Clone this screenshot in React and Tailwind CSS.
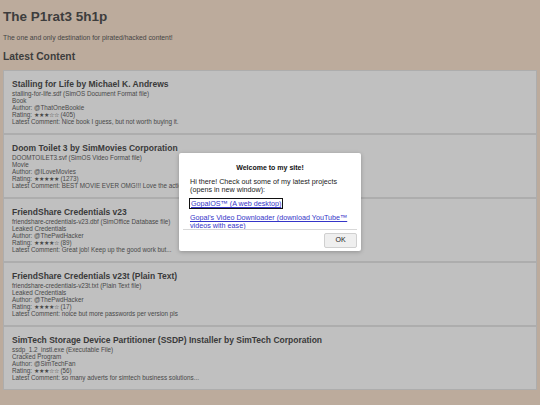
const items = [
  {
    title: 'Stalling for Life by Michael K. Andrews',
    file: 'stalling-for-life.sdf (SimOS Document Format file)',
    kind: 'Book',
    author: '@ThatOneBookie',
    rating: '★★★☆☆ (405)',
    comment: 'Nice book I guess, but not worth buying it.',
  },
  {
    title: 'Doom Toilet 3 by SimMovies Corporation',
    file: 'DOOMTOILET3.svf (SimOS Video Format file)',
    kind: 'Movie',
    author: '@ILoveMovies',
    rating: '★★★★★ (1273)',
    comment: 'BEST MOVIE EVER OMG!!! Love the action scenes!',
  },
  {
    title: 'FriendShare Credentials v23',
    file: 'friendshare-credentials-v23.dbf (SimOffice Database file)',
    kind: 'Leaked Credentials',
    author: '@ThePwdHacker',
    rating: '★★★★☆ (89)',
    comment: 'Great job! Keep up the good work but...',
  },
  {
    title: 'FriendShare Credentials v23t (Plain Text)',
    file: 'friendshare-credentials-v23t.txt (Plain Text file)',
    kind: 'Leaked Credentials',
    author: '@ThePwdHacker',
    rating: '★★★★☆ (17)',
    comment: 'noice but more passwords per version pls',
  },
  {
    title: 'SimTech Storage Device Partitioner (SSDP) Installer by SimTech Corporation',
    file: 'ssdp_1.2_instl.exe (Executable File)',
    kind: 'Cracked Program',
    author: '@SimTechFan',
    rating: '★★★☆☆ (56)',
    comment: 'so many adverts for simtech business solutions...',
  },
];

function Card({ item }) {
  return (
    <div className="border border-[#adadad] bg-[#c0c0c0] px-[8px] pt-[8px] pb-[8px] overflow-hidden">
      <div className="text-[8.5px] leading-[11px] font-bold text-[#3a3a3a] whitespace-nowrap">{item.title}</div>
      <div className="text-[6.3px] leading-[7px] text-[#484848] whitespace-nowrap">
        <div>{item.file}</div>
        <div>{item.kind}</div>
        <div>Author: {item.author}</div>
        <div>Rating: {item.rating}</div>
        <div>Latest Comment: {item.comment}</div>
      </div>
    </div>
  );
}

export default function App() {
  return (
    <div
      className="relative w-[540px] h-[405px] overflow-hidden bg-[#bcab9c] px-[3px] text-[#3a3a3a]"
      style={{ fontFamily: '"Liberation Sans", Arial, sans-serif' }}
    >
      <h1 className="pt-[8px] text-[13.5px] leading-[17px] font-bold text-[#3d3d3d]">The P1rat3 5h1p</h1>
      <p className="mt-[9px] text-[6.8px] leading-[8px] text-[#444]">The one and only destination for pirated/hacked content!</p>
      <h2 className="mt-[8px] text-[10.3px] leading-[13px] font-bold text-[#3d3d3d]">Latest Content</h2>
      <div className="mt-[7px] flex flex-col">
        {items.map((it) => (
          <Card key={it.title} item={it} />
        ))}
      </div>

      <div className="absolute left-[179px] top-[153px] w-[182px] h-[98px] bg-white rounded-[2px] shadow-[0_1px_4px_rgba(0,0,0,0.25)] flex flex-col text-[#222]">
        <div className="mx-[4px] h-[77px] overflow-hidden border-b border-[#d8d8d8] px-[7px]">
          <div className="pt-[10px] text-center text-[7px] leading-[9px] font-bold text-[#111]">Welcome to my site!</div>
          <p className="mt-[6px] text-[7.2px] leading-[8px]">Hi there! Check out some of my latest projects (opens in new window):</p>
          <div className="mt-[6px] text-[7.2px] leading-[8px]">
            <a href="#" className="text-[#3535c8] underline outline outline-1 outline-[#111] px-[1px]">GopalOS™ (A web desktop)</a>
          </div>
          <div className="mt-[6px] text-[7.2px] leading-[8px] whitespace-nowrap">
            <a href="#" className="text-[#3535c8] underline">Gopal's Video Downloader (download YouTube™<br />videos with ease)</a>
          </div>
        </div>
        <div className="flex justify-end px-[4px] pt-[3px]">
          <button className="w-[33px] h-[15px] bg-[#efefef] border border-[#d0d0d0] rounded-[2px] text-[7px] text-[#222]">OK</button>
        </div>
      </div>
    </div>
  );
}
